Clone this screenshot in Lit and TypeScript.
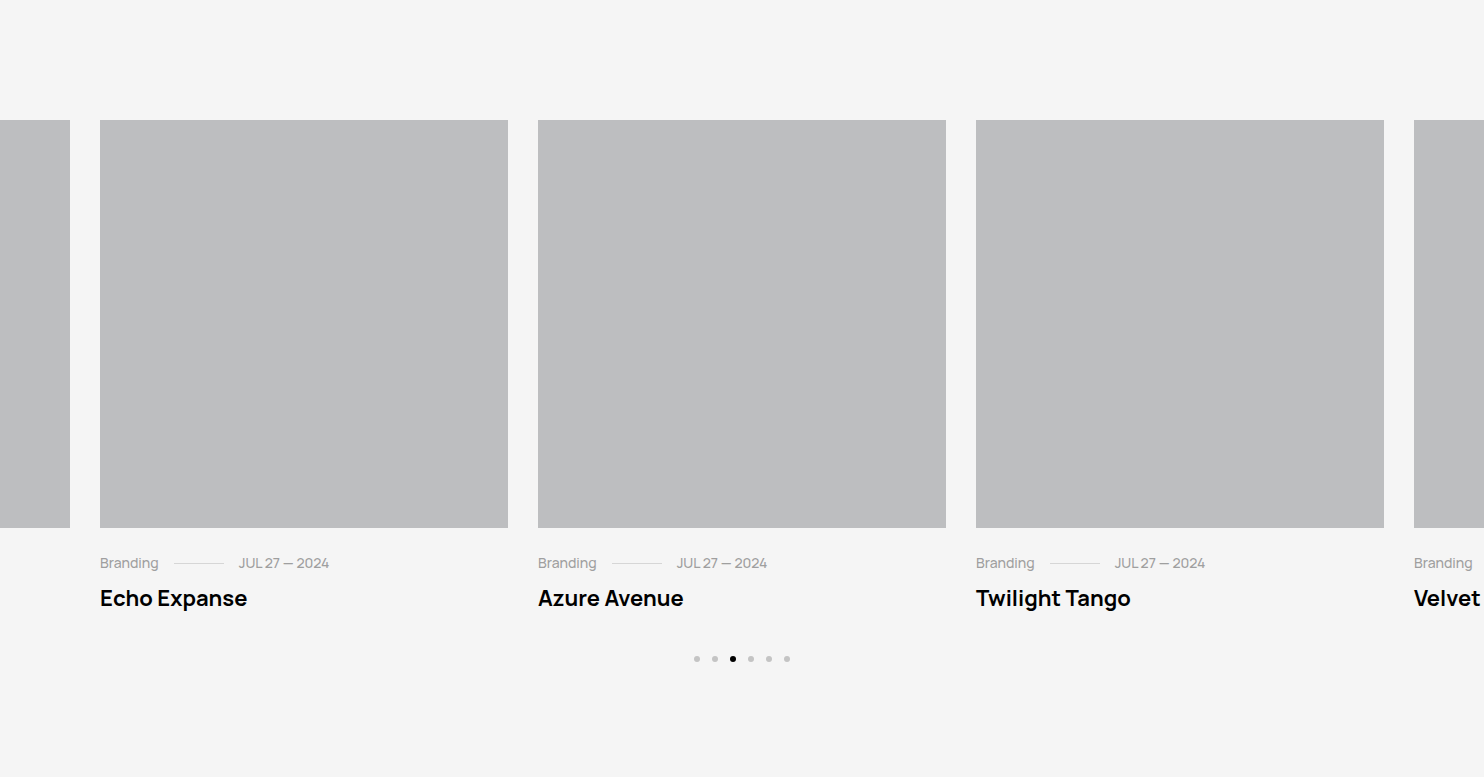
import { LitElement, html, css, nothing } from "lit";
import { customElement, property, state } from "lit/decorators.js";

interface Project {
  title: string;
  category: string;
  date: string;
}

const meta = { category: "Branding", date: "JUL 27 — 2024" };

const slides: (Project | null)[] = [
  null,
  { title: "Echo Expanse", ...meta },
  { title: "Azure Avenue", ...meta },
  { title: "Twilight Tango", ...meta },
  { title: "Velvet V", ...meta },
];

@customElement("project-card")
export class ProjectCard extends LitElement {
  @property({ attribute: false }) project: Project | null = null;

  static styles = css`
    :host {
      display: block;
    }
    .cover {
      aspect-ratio: 1;
      background: #bdbec0;
    }
    .meta {
      display: flex;
      align-items: center;
      gap: 15px;
      margin-top: 25px;
      font-size: 14px;
      font-weight: 500;
      line-height: 20px;
      color: #9f9f9f;
      white-space: nowrap;
    }
    .rule {
      width: 50px;
      height: 1px;
      border-bottom: 1px solid #d6d6d6;
    }
    .title {
      margin: 8px 0 0;
      font-size: 22px;
      line-height: 34px;
      font-weight: 700;
      white-space: nowrap;
    }
    .link {
      color: #000;
      text-decoration: none;
    }
  `;

  render() {
    const p = this.project;
    return html`
      <div class="cover"></div>
      ${p
        ? html`
            <div class="meta">
              <span>${p.category}</span>
              <span class="rule"></span>
              <span>${p.date}</span>
            </div>
            <h3 class="title"><a class="link" href="#">${p.title}</a></h3>
          `
        : nothing}
    `;
  }
}

@customElement("app-root")
export class AppRoot extends LitElement {
  @state() private active = 2;

  static styles = css`
    :host {
      display: block;
      box-sizing: border-box;
      min-height: 100vh;
      padding: 120px 0;
      overflow: hidden;
      background: #f5f5f5;
      font-family: Manrope, Inter, sans-serif;
    }
    .track {
      display: flex;
      justify-content: center;
      gap: 30px;
    }
    .slide {
      flex: 0 0 calc((100% - 260px) / 3);
    }
    .dots {
      display: flex;
      justify-content: center;
      gap: 12px;
      margin-top: 41px;
    }
    .dot {
      width: 6px;
      height: 6px;
      padding: 0;
      border: 0;
      border-radius: 50%;
      background: #c4c4c4;
      cursor: pointer;
    }
    .dot.active {
      background: #000;
    }
  `;

  render() {
    return html`
      <div class="track">
        ${slides.map(
          (p) => html`<project-card class="slide" .project=${p}></project-card>`
        )}
      </div>
      <nav class="dots" aria-label="Slides">
        ${[0, 1, 2, 3, 4, 5].map(
          (i) => html`<button
            class="dot ${i === this.active ? "active" : ""}"
            aria-label="Go to slide ${i + 1}"
            @click=${() => (this.active = i)}
          ></button>`
        )}
      </nav>
    `;
  }
}
